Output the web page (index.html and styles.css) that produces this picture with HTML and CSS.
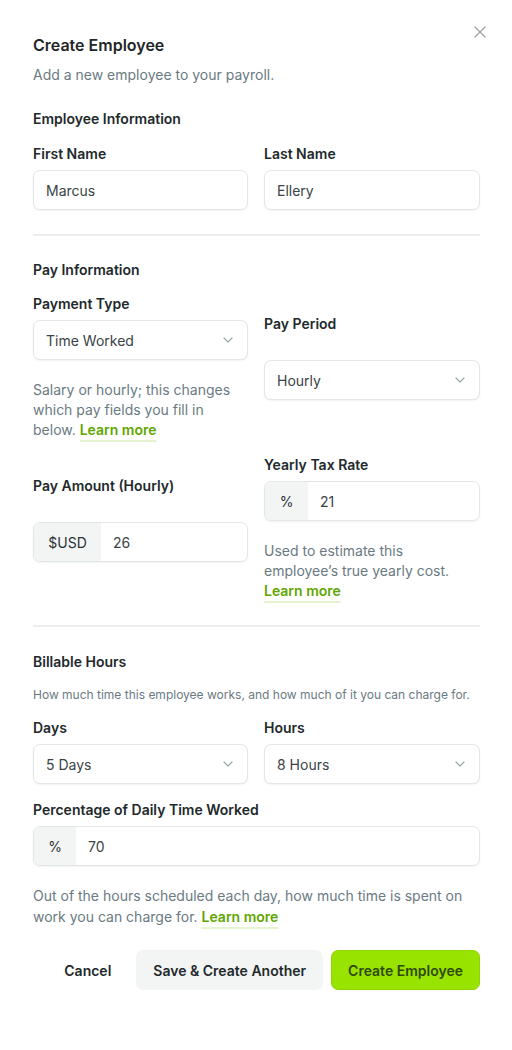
FILE: index.html
```html
<!DOCTYPE html>
<html lang="en">
<head>
<meta charset="utf-8">
<title>Create Employee</title>
<link rel="stylesheet" href="styles.css">
</head>
<body>
<div class="dialog">
  <button class="close" aria-label="Close">
    <svg width="12" height="12" viewBox="0 0 12 12"><path d="M1 1L11 11M11 1L1 11" stroke="#9aa3a6" stroke-width="1.3" fill="none" stroke-linecap="round"/></svg>
  </button>
  <h1 class="title">Create Employee</h1>
  <p class="subtitle">Add a new employee to your payroll.</p>

  <h2 class="section">Employee Information</h2>
  <div class="row">
    <div class="field">
      <label class="label">First Name</label>
      <div class="input"><span class="value">Marcus</span></div>
    </div>
    <div class="field">
      <label class="label">Last Name</label>
      <div class="input"><span class="value">Ellery</span></div>
    </div>
  </div>

  <hr class="divider">

  <h2 class="section">Pay Information</h2>
  <div class="row row-pay1">
    <div class="field">
      <label class="label">Payment Type</label>
      <div class="input select"><span class="value">Time Worked</span><svg class="chev" width="10" height="6" viewBox="0 0 10 6"><path d="M1 1l4 4 4-4" stroke="#9aa5a8" stroke-width="1.2" fill="none" stroke-linecap="round" stroke-linejoin="round"/></svg></div>
      <p class="help help-gap"><span>Salary or hourly; this changes which pay fields you fill in</span> <span>below.</span> <a class="link">Learn more</a></p>
    </div>
    <div class="field shift-20">
      <label class="label">Pay Period</label>
      <div class="input select wide-gap"><span class="value">Hourly</span><svg class="chev" width="10" height="6" viewBox="0 0 10 6"><path d="M1 1l4 4 4-4" stroke="#9aa5a8" stroke-width="1.2" fill="none" stroke-linecap="round" stroke-linejoin="round"/></svg></div>
    </div>
  </div>

  <div class="row row-pay2">
    <div class="field shift-21">
      <label class="label">Pay Amount (Hourly)</label>
      <div class="input addon-input wide-gap"><span class="addon addon-usd">$USD</span><span class="value">26</span></div>
    </div>
    <div class="field">
      <label class="label">Yearly Tax Rate</label>
      <div class="input addon-input"><span class="addon addon-pct">%</span><span class="value">21</span></div>
      <p class="help help-gap"><span>Used to estimate this employee’s true yearly cost.</span> <a class="link">Learn more</a></p>
    </div>
  </div>

  <hr class="divider">

  <h2 class="section section-after">Billable Hours</h2>
  <p class="small-help">How much time this employee works, and how much of it you can charge for.</p>
  <div class="row">
    <div class="field">
      <label class="label">Days</label>
      <div class="input select"><span class="value">5 Days</span><svg class="chev" width="10" height="6" viewBox="0 0 10 6"><path d="M1 1l4 4 4-4" stroke="#9aa5a8" stroke-width="1.2" fill="none" stroke-linecap="round" stroke-linejoin="round"/></svg></div>
    </div>
    <div class="field">
      <label class="label">Hours</label>
      <div class="input select"><span class="value">8 Hours</span><svg class="chev" width="10" height="6" viewBox="0 0 10 6"><path d="M1 1l4 4 4-4" stroke="#9aa5a8" stroke-width="1.2" fill="none" stroke-linecap="round" stroke-linejoin="round"/></svg></div>
    </div>
  </div>
  <div class="field field-full">
    <label class="label">Percentage of Daily Time Worked</label>
    <div class="input addon-input"><span class="addon addon-pct2">%</span><span class="value">70</span></div>
  </div>
  <p class="help help-bottom"><span>Out of the hours scheduled each day, how much time is spent on</span> <span>work you can charge for.</span> <a class="link">Learn more</a></p>

  <div class="actions">
    <button class="btn btn-ghost">Cancel</button>
    <button class="btn btn-secondary">Save &amp; Create Another</button>
    <button class="btn btn-primary">Create Employee</button>
  </div>
</div>
</body>
</html>
```
FILE: styles.css
```css
* { box-sizing: border-box; }
html, body { margin: 0; padding: 0; background: #ffffff; }
body {
  font-family: "Inter", "Liberation Sans", sans-serif;
  color: #22292b;
  -webkit-font-smoothing: antialiased;
}
.dialog {
  position: relative;
  width: 512px;
  padding: 33px 32px 40px 33px;
}
.close {
  position: absolute;
  top: 26px;
  right: 26px;
  width: 12px;
  height: 12px;
  padding: 0;
  border: 0;
  background: none;
  display: flex;
}
.title {
  margin: 0;
  font-size: 16px;
  line-height: 24px;
  font-weight: 600;
  color: #1f2628;
}
.subtitle {
  margin: 8px 0 0;
  font-size: 14px;
  line-height: 20px;
  color: #6a7a82;
}
.section {
  margin: 24px 0 0;
  font-size: 14px;
  line-height: 20px;
  font-weight: 600;
  color: #22292b;
}
.section-after { margin-top: 25px; }
.row {
  display: grid;
  grid-template-columns: 215px 216px;
  column-gap: 16px;
  align-items: start;
  margin-top: 15px;
}
.row-pay1 { margin-top: 14px; }
.row-pay2 { margin-top: 15px; }
.field { display: flex; flex-direction: column; }
.shift-20 { margin-top: 20px; }
.shift-21 { margin-top: 21px; }
.label {
  font-size: 14px;
  line-height: 20px;
  font-weight: 600;
  color: #22292b;
}
.input {
  margin-top: 6px;
  height: 40px;
  border: 1px solid #e3e6e7;
  border-radius: 7px;
  background: #fff;
  box-shadow: 0 1px 2px rgba(20, 30, 35, 0.06);
  display: flex;
  align-items: center;
  padding: 0 12px;
  font-size: 14px;
  color: #3a4346;
  overflow: hidden;
}
.wide-gap { margin-top: 26px; }
.select { justify-content: space-between; }
.chev { margin-right: 2px; flex: none; }
.addon-input { padding: 0; }
.addon {
  align-self: stretch;
  display: flex;
  align-items: center;
  justify-content: center;
  background: #f3f4f4;
  color: #2b3335;
  flex: none;
}
.addon-usd { width: 67px; }
.addon-pct { width: 43px; }
.addon-pct2 { width: 42px; }
.addon-input .value { padding-left: 12px; }
.help {
  margin: 0;
  font-size: 14px;
  line-height: 20px;
  color: #6a7a82;
}
.help-gap { margin-top: 20px; }
.help-bottom { margin-top: 19px; line-height: 21px; }
.link {
  color: #5fa600;
  font-weight: 600;
  text-decoration: underline;
  text-decoration-color: #e6f3d0;
  text-decoration-thickness: 2px;
  text-underline-offset: 5px;
}
.divider {
  margin: 24px 0 0;
  border: 0;
  height: 2px;
  background: #eceeee;
}
.small-help {
  margin: 15px 0 0;
  font-size: 12px;
  line-height: 16px;
  color: #6a7a82;
}
.field-full { margin-top: 16px; }
.actions {
  margin-top: 23px;
  display: flex;
  justify-content: flex-end;
  gap: 8px;
}
.btn {
  height: 40px;
  border-radius: 7px;
  font-family: inherit;
  font-size: 14px;
  font-weight: 600;
  padding: 0 16px;
  border: 1px solid transparent;
  color: #22292b;
  cursor: pointer;
}
.btn-ghost { background: transparent; }
.btn-secondary { background: #f3f4f4; }
.btn-primary {
  background: #99e300;
  border-color: #8fd400;
  color: #2f4a08;
}
```
